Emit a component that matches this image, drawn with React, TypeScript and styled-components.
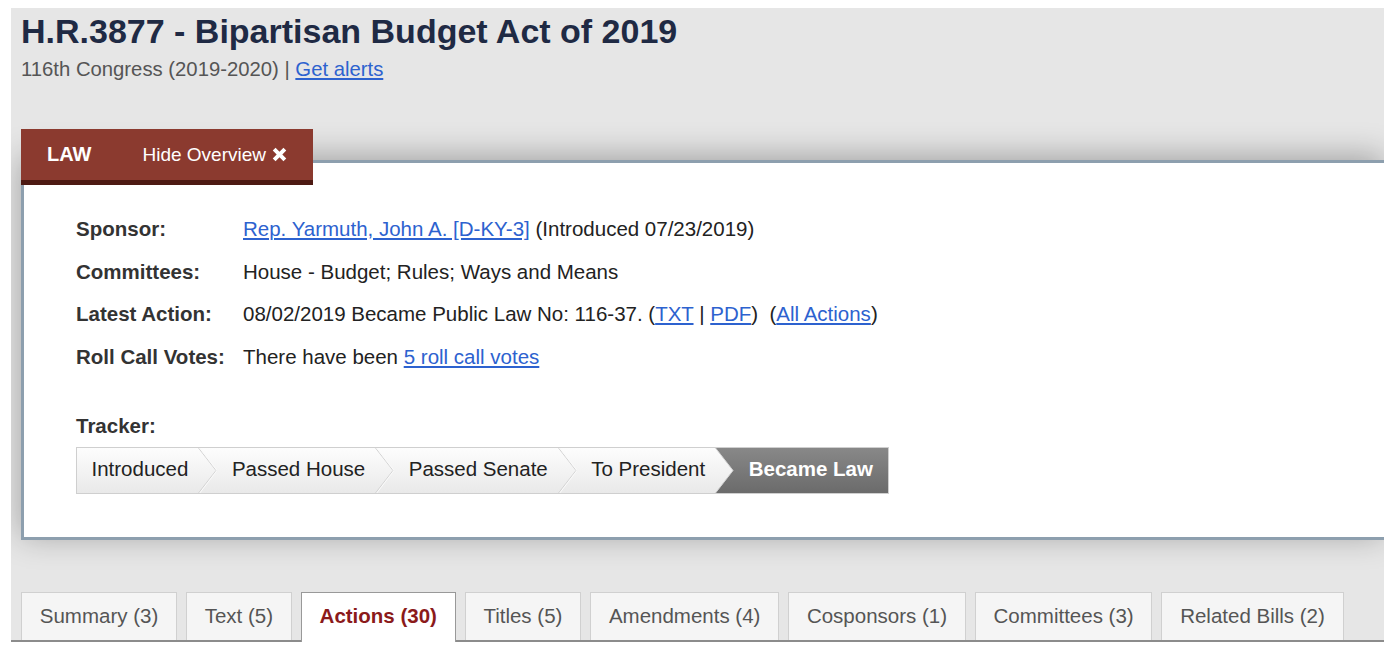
import React from "react";
import styled, { createGlobalStyle } from "styled-components";

const GlobalStyle = createGlobalStyle`
  html, body { margin: 0; padding: 0; background: #fff; }
  body { font-family: "Liberation Sans", Arial, Helvetica, sans-serif; color: #222; }
  * { box-sizing: border-box; }
`;

const Page = styled.div`
  padding: 8px 0 0 11px;
`;

const Container = styled.div`
  width: 1373px;
  background: #e6e6e6;
  overflow: hidden;
`;

const Header = styled.header`
  padding: 3px 0 0 10px;
`;

const Title = styled.h1`
  margin: 0;
  font-size: 34px;
  line-height: 40px;
  font-weight: bold;
  color: #1f2a44;
`;

const Subtitle = styled.div`
  margin-top: 6px;
  font-size: 20.3px;
  line-height: 24px;
  color: #555;
`;

const Link = styled.a`
  color: #2d62cf;
  text-decoration: underline;
  cursor: pointer;
`;

const OverviewSection = styled.section`
  margin-top: 48px;
  padding-left: 10px;
`;

const LawTab = styled.div`
  position: relative;
  z-index: 2;
  width: 292px;
  height: 56px;
  display: flex;
  align-items: center;
  padding-left: 26px;
  background: #8b3a2f;
  border-bottom: 5px solid #4d1a13;
  color: #fff;
`;

const LawLabel = styled.span`
  font-weight: bold;
  font-size: 20px;
`;

const HideButton = styled.span`
  margin-left: 51px;
  display: flex;
  align-items: center;
  gap: 6px;
  font-size: 19px;
  color: #fff;
`;

const Panel = styled.div`
  position: relative;
  z-index: 1;
  margin-top: -25px;
  background: #fff;
  border: 3px solid #8d9fae;
  border-right: none;
  box-shadow: 0 -4px 30px rgba(0, 0, 0, 0.3);
  padding: 45px 0 43px 52px;
`;

const Fields = styled.dl`
  margin: 0;
  display: grid;
  grid-template-columns: 167px 1fr;
  font-size: 20.5px;
  line-height: 42.5px;
`;

const Label = styled.dt`
  font-weight: bold;
  color: #333;
`;

const Value = styled.dd`
  margin: 0;
  color: #222;
`;

const TrackerLabel = styled.div`
  margin-top: 35px;
  font-size: 20.5px;
  line-height: 25px;
  font-weight: bold;
  color: #333;
`;

const Tracker = styled.ol`
  margin: 9px 0 0;
  padding: 0;
  list-style: none;
  display: inline-flex;
  height: 47px;
  border: 1px solid #cfcfcf;
  background: linear-gradient(#fdfdfd, #e9e9e9);
`;

const Step = styled.li<{ $active?: boolean }>`
  display: flex;
  align-items: stretch;
  gap: 10px;
  padding-left: 14.5px;
  padding-right: ${(p) => (p.$active ? "15px" : "0")};
  font-size: 20.5px;
  color: ${(p) => (p.$active ? "#fff" : "#222")};
  font-weight: ${(p) => (p.$active ? "bold" : "normal")};
  background: ${(p) => (p.$active ? "linear-gradient(#888, #6b6b6b)" : "transparent")};
`;

const StepText = styled.span`
  display: flex;
  align-items: center;
  padding-bottom: 3px;
`;

const ChevronSvg = styled.svg`
  display: block;
  flex: none;
`;

const Chevron = ({ intoActive }: { intoActive?: boolean }) => (
  <ChevronSvg width="19" height="45" viewBox="0 0 19 45">
    <defs>
      <linearGradient id="grayStep" x1="0" y1="0" x2="0" y2="1">
        <stop offset="0" stopColor="#888" />
        <stop offset="1" stopColor="#6b6b6b" />
      </linearGradient>
    </defs>
    {intoActive && <polygon points="0.5,0 19,0 19,45 0.5,45 18,22.5" fill="url(#grayStep)" />}
    <polyline points="0.5,0 18,22.5 0.5,45" fill="none" stroke="#d3d3d3" strokeWidth="1" />
    {!intoActive && <polyline points="1.8,0 19,22.5 1.8,45" fill="none" stroke="#fafafa" strokeWidth="1" />}
  </ChevronSvg>
);

const TabBar = styled.nav`
  margin-top: 52px;
  padding-left: 10px;
  display: flex;
  align-items: flex-end;
  gap: 9px;
  height: 50px;
  border-bottom: 2px solid #8c8c8c;
`;

const Tab = styled.div<{ $active?: boolean }>`
  position: relative;
  height: ${(p) => (p.$active ? "50px" : "48px")};
  margin-bottom: ${(p) => (p.$active ? "-2px" : "0")};
  padding: 0 17.75px;
  display: flex;
  align-items: flex-start;
  line-height: 46px;
  font-size: 20.5px;
  white-space: nowrap;
  background: ${(p) => (p.$active ? "#fff" : "#f5f5f5")};
  border: 1px solid ${(p) => (p.$active ? "#999" : "#d0d0d0")};
  border-bottom: none;
  color: ${(p) => (p.$active ? "#8b1a1a" : "#555")};
  font-weight: ${(p) => (p.$active ? "bold" : "normal")};
`;

const CloseIcon = () => (
  <svg width="15" height="15" viewBox="0 0 16 16">
    <path
      d="M0.8 3.8 L3.8 0.8 L8 5 L12.2 0.8 L15.2 3.8 L11 8 L15.2 12.2 L12.2 15.2 L8 11 L3.8 15.2 L0.8 12.2 L5 8 Z"
      fill="#fff"
    />
  </svg>
);

const steps = ["Introduced", "Passed House", "Passed Senate", "To President", "Became Law"];
const tabs = [
  "Summary (3)",
  "Text (5)",
  "Actions (30)",
  "Titles (5)",
  "Amendments (4)",
  "Cosponsors (1)",
  "Committees (3)",
  "Related Bills (2)",
];

export default function App() {
  return (
    <>
      <GlobalStyle />
      <Page>
        <Container>
          <Header>
            <Title>H.R.3877 - Bipartisan Budget Act of 2019</Title>
            <Subtitle>
              116th Congress (2019-2020) | <Link>Get alerts</Link>
            </Subtitle>
          </Header>

          <OverviewSection>
            <LawTab>
              <LawLabel>LAW</LawLabel>
              <HideButton>
                Hide Overview <CloseIcon />
              </HideButton>
            </LawTab>
            <Panel>
              <Fields>
                <Label>Sponsor:</Label>
                <Value>
                  <Link>Rep. Yarmuth, John A. [D-KY-3]</Link> (Introduced 07/23/2019)
                </Value>
                <Label>Committees:</Label>
                <Value>House - Budget; Rules; Ways and Means</Value>
                <Label>Latest Action:</Label>
                <Value>
                  08/02/2019 Became Public Law No: 116-37. (<Link>TXT</Link> | <Link>PDF</Link>)
                  {"\u00a0 "}(<Link>All Actions</Link>)
                </Value>
                <Label>Roll Call Votes:</Label>
                <Value>
                  There have been <Link>5 roll call votes</Link>
                </Value>
              </Fields>
              <TrackerLabel>Tracker:</TrackerLabel>
              <Tracker>
                {steps.map((s, i) => {
                  const active = i === steps.length - 1;
                  return (
                    <Step key={s} $active={active}>
                      <StepText>{s}</StepText>
                      {!active && <Chevron intoActive={i === steps.length - 2} />}
                    </Step>
                  );
                })}
              </Tracker>
            </Panel>
          </OverviewSection>

          <TabBar>
            {tabs.map((t) => (
              <Tab key={t} $active={t === "Actions (30)"}>
                {t}
              </Tab>
            ))}
          </TabBar>
        </Container>
      </Page>
    </>
  );
}
